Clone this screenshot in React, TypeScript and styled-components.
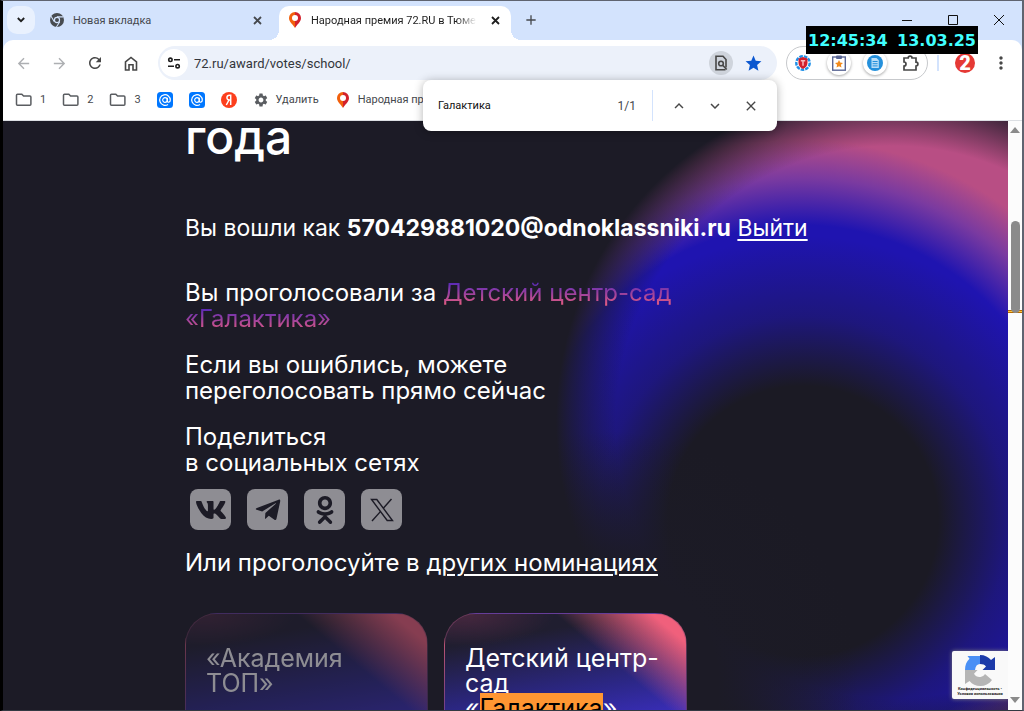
import React from "react";
import styled, { createGlobalStyle, css } from "styled-components";
import {
  MdArrowBack,
  MdArrowForward,
  MdRefresh,
  MdSettings,
  MdStar,
  MdMoreVert,
  MdClose,
  MdExpandLess,
  MdExpandMore,
  MdAdd,
} from "react-icons/md";
import { FaVk, FaTelegramPlane, FaOdnoklassniki } from "react-icons/fa";

const UI_FONT = `Roboto, "Open Sans", sans-serif`;
const PAGE_FONT = `Inter, "Open Sans", sans-serif`;
const NIGHT = "#1c1b26";

const GlobalStyle = createGlobalStyle`
  * { box-sizing: border-box; }
  body { margin: 0; background: #000; }
  button, input { font: inherit; color: inherit; border: 0; padding: 0; margin: 0; background: none; }
  button { cursor: pointer; }
`;

/* Browser window */

const Window = styled.div`
  height: 100vh;
  display: flex;
  flex-direction: column;
  border: 1px solid #5f6470;
  border-left: 3px solid #000;
  border-right-width: 2px;
  border-bottom-color: #333942;
  font-family: ${UI_FONT};
  font-size: 11px;
  color: #45484d;
  overflow: hidden;
`;

const Chrome = styled.header`
  position: relative;
  z-index: 2;
  flex: none;
  background: #d3e3fd;
`;

const TabStrip = styled.div`
  display: flex;
  align-items: flex-start;
  height: 39px;
  padding: 5px 0 0 4px;
`;

const TabSearch = styled.button`
  display: grid;
  place-items: center;
  width: 28px;
  height: 28px;
  border-radius: 10px;
  background: #e9f1fe;
  color: #1f1f1f;
`;

const Tab = styled.div<{ $active?: boolean }>`
  position: relative;
  display: flex;
  align-items: center;
  gap: ${(p) => (p.$active ? 8 : 9)}px;
  width: ${(p) => (p.$active ? 232 : 236)}px;
  height: ${(p) => (p.$active ? 34 : 28)}px;
  padding: ${(p) => (p.$active ? "0 9px 6px 8px" : "0 7px 0 15px")};
  margin-left: ${(p) => (p.$active ? 8 : 0)}px;
  border-radius: 10px 10px 0 0;
  ${(p) =>
    p.$active &&
    css`
      background: #fff;
      color: #1f1f1f;
      &::before,
      &::after {
        content: "";
        position: absolute;
        bottom: 0;
        width: 10px;
        height: 10px;
      }
      &::before {
        right: 100%;
        background: radial-gradient(circle at 0 0, transparent 10px, #fff 10px);
      }
      &::after {
        left: 100%;
        background: radial-gradient(circle at 100% 0, transparent 10px, #fff 10px);
      }
    `}
`;

const TabTitle = styled.span<{ $fade?: boolean }>`
  flex: 1;
  overflow: hidden;
  white-space: nowrap;
  ${(p) => p.$fade && css`mask-image: linear-gradient(90deg, #000 86%, transparent 98%);`}
`;

const TabClose = styled.button`
  display: grid;
  place-items: center;
  width: 14px;
  height: 14px;
`;

const NewTab = styled.button`
  display: grid;
  place-items: center;
  width: 28px;
  height: 28px;
  margin-left: 6px;
`;

const WindowButtons = styled.div`
  display: flex;
  margin-left: auto;
  color: #111;
`;

const WindowButton = styled.button`
  display: grid;
  place-items: center;
  width: 46px;
  height: 28px;
`;

const Toolbar = styled.div`
  display: flex;
  align-items: center;
  height: 46px;
  padding: 0 7px 0 6px;
  background: #fff;
  border-radius: 10px 10px 0 0;
`;

const NavButtons = styled.nav`
  display: flex;
  gap: 8px;
  margin-right: 13px;
`;

const IconButton = styled.button<{ $muted?: boolean }>`
  display: grid;
  place-items: center;
  width: 28px;
  height: 28px;
  border-radius: 50%;
  color: ${(p) => (p.$muted ? "#adafb2" : "#474747")};
`;

const AddressBar = styled.div`
  flex: 1;
  display: flex;
  align-items: center;
  gap: 6px;
  height: 34px;
  padding: 0 10px 0 2px;
  border-radius: 17px;
  background: #ecf1fa;
`;

const SiteInfo = styled(IconButton)`
  background: #fff;
  color: #1f1f1f;
`;

const AddressInput = styled.input`
  flex: 1;
  min-width: 0;
  height: 28px;
  font-size: 13px;
  color: #33363b;
  outline: none;
`;

const FindChip = styled.button`
  display: grid;
  place-items: center;
  width: 24px;
  height: 24px;
  border-radius: 50%;
  background: #cfd4dc;
  color: #474747;
`;

const StarButton = styled(IconButton)`
  color: #0b57d0;
`;

const Extensions = styled.div`
  display: flex;
  align-items: center;
  gap: 8px;
  height: 34px;
  padding: 0 2px;
  margin-left: 9px;
  border: 1px solid #c7c9cc;
  border-radius: 17px;
`;

const ExtensionButton = styled(IconButton)<{ $raised?: boolean }>`
  ${(p) => p.$raised && css`box-shadow: 0 1px 3px rgba(0, 0, 0, 0.35);`}
  width: ${(p) => (p.$raised ? 24 : 28)}px;
  height: ${(p) => (p.$raised ? 24 : 28)}px;
  margin: ${(p) => (p.$raised ? "0 2px" : "0")};
`;

const ToolbarDivider = styled.span`
  width: 2px;
  height: 16px;
  margin: 0 16px 0 9px;
  background: #d3e3fd;
`;

const Avatar = styled.button`
  display: grid;
  place-items: center;
  width: 20px;
  height: 20px;
  margin-right: 12px;
  border-radius: 50%;
  background: #e53935;
  color: #fff;
  font: 900 20px/20px Roboto, sans-serif;
`;

const Bookmarks = styled.nav`
  display: flex;
  align-items: center;
  gap: 16px;
  height: 35px;
  padding: 0 12px 7px;
  background: #fff;
  border-bottom: 1px solid #dcdfe3;
`;

const Bookmark = styled.a`
  display: flex;
  align-items: center;
  gap: 7px;
  color: inherit;
  text-decoration: none;
  white-space: nowrap;
`;

const FindBar = styled.form`
  position: absolute;
  top: 79px;
  right: 245px;
  display: flex;
  align-items: center;
  gap: 8px;
  width: 354px;
  height: 51px;
  padding: 0 12px 0 15px;
  border-radius: 8px;
  background: #fff;
  box-shadow: 0 1px 10px rgba(0, 0, 0, 0.3);
`;

const FindInput = styled.input`
  flex: 1;
  min-width: 0;
  height: 28px;
  color: #111;
  outline: none;
`;

const FindCount = styled.output`
  font-size: 12px;
`;

const FindDivider = styled.span`
  width: 1px;
  height: 31px;
  margin: 0 4px 0 8px;
  background: #d3e3fd;
`;

const Clock = styled.time`
  position: absolute;
  top: 25px;
  right: 44px;
  display: flex;
  justify-content: space-between;
  width: 172px;
  padding: 2px 2px 0;
  background: #000;
  color: #40ffff;
  font: bold 16px/26px "DejaVu Sans", sans-serif;
`;

/* Page */

const Body = styled.div`
  flex: 1;
  min-height: 0;
  display: flex;
`;

const Page = styled.main`
  position: relative;
  flex: 1;
  min-width: 0;
  overflow: hidden;
  padding-left: 182px;
  color: #fff;
  font: 400 24px/26px ${PAGE_FONT};
  background:
    radial-gradient(circle at right 400px top 560px, ${NIGHT} 110px, transparent 250px),
    radial-gradient(circle at right 116px top 301px, transparent 276px, #1c1b2680 306px, ${NIGHT} 336px),
    radial-gradient(circle at right 205px top 400px, #1b1a24 135px, #1d1863aa 205px, transparent 285px),
    radial-gradient(circle at right 208px top 369px, #1f14b0 265px, #7a3aa0 312px, #b84e84 350px);
`;

const Title = styled.h1`
  margin: 0 0 62px;
  font-size: 48px;
  font-weight: 500;
  line-height: 32px;
`;

const Signed = styled.p`
  margin: 0 0 39px;
  font-size: 23px;
  white-space: nowrap;
`;

const Text = styled.p`
  margin: 0 0 20px;
`;

const ShareText = styled(Text)`
  margin-bottom: 13px;
`;

const PageLink = styled.a`
  color: inherit;
  text-decoration: underline;
  text-decoration-thickness: 2px;
  text-underline-offset: 3px;
`;

const Nominee = styled.span`
  color: transparent;
  background: linear-gradient(#3b1fc4, #f0607c);
  background-clip: text;
  box-decoration-break: clone;
  -webkit-box-decoration-break: clone;
`;

const Share = styled.div`
  display: flex;
  gap: 16px;
  margin: 0 0 20px 5px;
`;

const ShareButton = styled.a`
  display: grid;
  place-items: center;
  width: 41px;
  height: 41px;
  border-radius: 8px;
  background: #8e8d93;
  color: ${NIGHT};
`;

const Cards = styled.div`
  display: flex;
  gap: 16px;
  margin-top: 37px;
`;

const Card = styled.article<{ $dimmed?: boolean }>`
  width: 243px;
  height: 240px;
  padding: 32px 20px 0;
  border: 1px solid #8a4a7088;
  border-radius: 32px;
  font-size: 25px;
  line-height: 25px;
  opacity: ${(p) => (p.$dimmed ? 0.5 : 1)};
  background:
    linear-gradient(220deg, #f0607c 22px, transparent 84px),
    radial-gradient(ellipse 90px 32px at 8% 0, #6a304c88, transparent),
    linear-gradient(170deg, #201e30 12%, #2c2788 36%, #3d2fc8 54%);
`;

const CardTitle = styled.h2`
  margin: 0;
  font: inherit;
  white-space: nowrap;
`;

const Found = styled.mark`
  background: #ff9632;
  color: #000;
`;

const Captcha = styled.aside`
  position: absolute;
  right: 0;
  bottom: 11px;
  display: flex;
  flex-direction: column;
  align-items: center;
  width: 56px;
  height: 48px;
  padding-top: 4px;
  border-radius: 2px 0 0 2px;
  background: #f9f9f9;
  box-shadow: 0 0 4px #808080;
  color: #222;
  font: bold 4px/5px Roboto, sans-serif;
  text-align: center;
`;

const ScrollTrack = styled.div`
  display: flex;
  flex-direction: column;
  align-items: center;
  width: 14px;
  padding: 6px 0 7px;
  background: #fcfcfc;
  color: #8b8b8b;
`;

const ScrollThumb = styled.div`
  position: relative;
  width: 9px;
  height: 92px;
  margin-top: 88px;
  border-radius: 5px;
  background: #8b8b8b;
`;

const FindMark = styled.span`
  width: 14px;
  height: 3px;
  margin: -3px 0 auto;
  background: #ffc83d;
  border: solid #b86a00;
  border-width: 1px 0;
`;

/* Icons */

const CloseIcon = () => (
  <svg width="9" height="9" viewBox="0 0 9 9" stroke="currentColor" strokeWidth="1.8">
    <path d="M1 1l7 7M8 1L1 8" />
  </svg>
);

const ChromeIcon = () => (
  <svg width="14" height="14" viewBox="0 0 24 24" fill="none">
    <circle cx="12" cy="12" r="12" fill="#474b50" />
    <circle cx="12" cy="12" r="5.4" fill="#d3e3fd" />
    <circle cx="12" cy="12" r="3.4" fill="#474b50" />
    <path d="M12 6.6h11M7.4 15L1.8 5.6M16.7 15L11 24" stroke="#d3e3fd" strokeWidth="1.8" />
  </svg>
);

const PinIcon = () => (
  <svg width="16" height="16" viewBox="0 0 16 16">
    <path d="M8 0a6 6 0 0 0-6 6c0 4 4 6.500 6 10z" fill="#f2600c" />
    <path d="M8 0a6 6 0 0 1 6 6c0 4-4 6.500-6 10z" fill="#d3202b" />
    <circle cx="8" cy="6" r="3" fill="#fff" />
  </svg>
);

const HomeIcon = () => (
  <svg width="14" height="15" viewBox="0 0 14 15" fill="none" stroke="currentColor" strokeWidth="1.6">
    <path d="M1.500 5.800L7 1.400l5.500 4.400v8.200H9V8.800H5V14H1.500z" />
  </svg>
);

const TuneIcon = () => (
  <svg width="14" height="12" viewBox="0 0 14 12" fill="none" stroke="currentColor" strokeWidth="1.6">
    <circle cx="3.400" cy="2.800" r="1.700" />
    <path d="M7 2.800h6M1 9.200h6" />
    <circle cx="10.600" cy="9.200" r="1.700" />
  </svg>
);

const FindInPageIcon = () => (
  <svg width="14" height="16" viewBox="0 0 14 16" fill="none" stroke="currentColor" strokeWidth="1.6">
    <path d="M12 12.500V4.500L9 1.200H2v13.600h9.500" />
    <circle cx="7" cy="8.500" r="2.300" />
    <path d="M8.700 10.200l4 4.300" />
  </svg>
);

const FolderIcon = () => (
  <svg width="18" height="14" viewBox="0 0 18 14" fill="none" stroke="#5a5d61" strokeWidth="1.5">
    <path d="M1.500 2.200c0-.7.300-1 1-1h4.300l1.800 1.900h6.300c.7 0 1 .3 1 1v7.100c0 .7-.3 1-1 1H2.500c-.7 0-1-.3-1-1z" />
  </svg>
);

const MailIcon = () => (
  <svg width="16" height="16" viewBox="0 0 16 16" fill="none">
    <rect width="16" height="16" rx="3.5" fill="#07f" />
    <circle cx="8" cy="8" r="2.300" stroke="#fff" strokeWidth="1.2" />
    <path d="M10.300 5.800v3c0 2.200 3 1.800 3-.8A5.300 5.300 0 1 0 11 12.400" stroke="#fff" strokeWidth="1.2" />
  </svg>
);

const YandexIcon = () => (
  <svg width="16" height="16" viewBox="0 0 16 16" fill="none">
    <circle cx="8" cy="8" r="8" fill="#fc3f1d" />
    <path d="M9.700 13V3.200H8.400C5.200 3.200 5.100 8 8.300 8h1.400M8 8l-2.700 5" stroke="#fff" strokeWidth="1.5" />
  </svg>
);

const ShieldIcon = () => (
  <svg width="16" height="16" viewBox="0 0 16 16" fill="none">
    <circle cx="8" cy="8" r="6.700" stroke="#1e90e8" strokeWidth="2.4" strokeDasharray="3.6 1" />
    <path d="M3.500 3.500L8 2l4.500 1.500V8c0 3-2.200 5-4.500 6-2.300-1-4.500-3-4.500-6z" fill="#d21f2d" />
    <path d="M5.800 5.800h4.400M8 5.800v5" stroke="#f6b7bb" strokeWidth="1.5" />
  </svg>
);

const ClipboardIcon = () => (
  <svg width="16" height="16" viewBox="0 0 16 16" fill="none">
    <rect x="1.700" y="2" width="12.600" height="13.200" fill="#fff" stroke="#5a6694" strokeWidth="1.4" />
    <rect x="5" y=".5" width="6" height="3.500" rx="1" fill="#5a6694" />
    <path d="M8 5l1.200 2.600 2.800.3-2.100 1.900.6 2.800L8 11.200l-2.500 1.400.6-2.800L4 7.900l2.800-.3z" fill="#f28a1c" />
  </svg>
);

const DocumentIcon = () => (
  <svg width="16" height="16" viewBox="0 0 16 16" fill="none">
    <circle cx="8" cy="8" r="8" fill="#2490dc" />
    <path d="M4.500 3h5l2.300 2.300V13H4.500z" fill="#b9ddf7" />
    <path d="M5.600 6.500h5M5.600 8.700h5M5.600 10.900h5" stroke="#2490dc" />
  </svg>
);

const PuzzleIcon = () => (
  <svg width="18" height="18" viewBox="0 0 18 18" fill="none" stroke="currentColor" strokeWidth="1.7">
    <path d="M2 4h4.200a1.900 1.900 0 0 1 3.800 0h4v4.200a1.900 1.900 0 0 1 0 3.800v4H2v-4a2 2 0 0 0 0-4z" />
  </svg>
);

const XLogo = () => (
  <svg width="24" height="24" viewBox="0 0 24 24" fill="none" stroke="currentColor" strokeWidth="1.4">
    <path d="M1.500 1.500h5.300L22.500 22.500h-5.300z" />
    <path d="M21.500 1l-8.200 9.300M10.600 13.400L2 23" />
  </svg>
);

const RecaptchaIcon = () => (
  <svg width="30" height="31" viewBox="0 0 30 31">
    <path d="M15 0v9c-3 0-4.500 2-5 6H0C0 10 1.500 6.500 4.500 3.800L2.500 1H15z" fill="#4a90f5" />
    <path d="M15 0c4.800 0 8.500 2 11 5l4-3v13H17.500l3.500-3.500C19.500 9.700 18 9 15 9z" fill="#1c3aa9" />
    <path d="M0 15h12.500L9 18.800c1.500 2.500 4 3.700 6.500 3.200 2-.4 3.300-1.300 4.500-3l7 6c-3 4-7 6-11.500 6-4.700 0-8.200-1.800-11-5L0 29z" fill="#b5b5b5" />
  </svg>
);

const ArrowIcon = ({ down }: { down?: boolean }) => (
  <svg width="10" height="6" viewBox="0 0 10 6" fill="currentColor">
    <path d={down ? "M0 0h10L5 6z" : "M0 6h10L5 0z"} />
  </svg>
);

export default function App() {
  return (
    <Window>
      <GlobalStyle />
      <Chrome>
        <TabStrip>
          <TabSearch aria-label="Поиск вкладок">
            <svg width="8" height="6" viewBox="0 0 8 6" fill="none" stroke="currentColor" strokeWidth="1.8">
              <path d="M.8 1L4 4.200 7.200 1" />
            </svg>
          </TabSearch>
          <Tab>
            <ChromeIcon />
            <TabTitle>Новая вкладка</TabTitle>
            <TabClose aria-label="Закрыть вкладку"><CloseIcon /></TabClose>
          </Tab>
          <Tab $active>
            <PinIcon />
            <TabTitle $fade>Народная премия 72.RU в Тюмени</TabTitle>
            <TabClose aria-label="Закрыть вкладку"><CloseIcon /></TabClose>
          </Tab>
          <NewTab aria-label="Новая вкладка"><MdAdd size={16} /></NewTab>
          <WindowButtons>
            <WindowButton aria-label="Свернуть">
              <svg width="10" height="10" viewBox="0 0 10 10" stroke="currentColor"><path d="M0 5.500h10" /></svg>
            </WindowButton>
            <WindowButton aria-label="Развернуть">
              <svg width="10" height="10" viewBox="0 0 10 10" fill="none" stroke="currentColor"><path d="M.5.500h9v9h-9z" /></svg>
            </WindowButton>
            <WindowButton aria-label="Закрыть">
              <svg width="10" height="10" viewBox="0 0 10 10" stroke="currentColor"><path d="M0 0l10 10M10 0L0 10" /></svg>
            </WindowButton>
          </WindowButtons>
        </TabStrip>

        <Toolbar>
          <NavButtons aria-label="Навигация">
            <IconButton $muted aria-label="Назад"><MdArrowBack size={17} /></IconButton>
            <IconButton $muted aria-label="Вперёд"><MdArrowForward size={17} /></IconButton>
            <IconButton aria-label="Обновить"><MdRefresh size={18} /></IconButton>
            <IconButton aria-label="Главная"><HomeIcon /></IconButton>
          </NavButtons>
          <AddressBar>
            <SiteInfo aria-label="Сведения о сайте"><TuneIcon /></SiteInfo>
            <AddressInput aria-label="Адресная строка" defaultValue="72.ru/award/votes/school/" />
            <FindChip aria-label="Найти на странице"><FindInPageIcon /></FindChip>
            <StarButton aria-label="Изменить закладку"><MdStar size={19} /></StarButton>
          </AddressBar>
          <Extensions>
            <ExtensionButton aria-label="Защита"><ShieldIcon /></ExtensionButton>
            <ExtensionButton $raised aria-label="Избранное"><ClipboardIcon /></ExtensionButton>
            <ExtensionButton $raised aria-label="Документы"><DocumentIcon /></ExtensionButton>
            <ExtensionButton aria-label="Расширения"><PuzzleIcon /></ExtensionButton>
          </Extensions>
          <ToolbarDivider />
          <Avatar aria-label="Профиль">2</Avatar>
          <IconButton aria-label="Меню"><MdMoreVert size={20} /></IconButton>
        </Toolbar>

        <Bookmarks aria-label="Закладки">
          <Bookmark href="#"><FolderIcon />1</Bookmark>
          <Bookmark href="#"><FolderIcon />2</Bookmark>
          <Bookmark href="#"><FolderIcon />3</Bookmark>
          <Bookmark href="#" aria-label="Почта"><MailIcon /></Bookmark>
          <Bookmark href="#" aria-label="Почта"><MailIcon /></Bookmark>
          <Bookmark href="#" aria-label="Яндекс"><YandexIcon /></Bookmark>
          <Bookmark href="#"><MdSettings size={16} color="#5a5d61" />Удалить</Bookmark>
          <Bookmark href="#"><PinIcon />Народная пр</Bookmark>
        </Bookmarks>

        <FindBar onSubmit={(e) => e.preventDefault()}>
          <FindInput aria-label="Найти на странице" defaultValue="Галактика" />
          <FindCount>1/1</FindCount>
          <FindDivider />
          <IconButton type="button" aria-label="Предыдущее"><MdExpandLess size={18} /></IconButton>
          <IconButton type="button" aria-label="Следующее"><MdExpandMore size={18} /></IconButton>
          <IconButton type="button" aria-label="Закрыть поиск"><MdClose size={16} /></IconButton>
        </FindBar>
        <Clock><span>12:45:34</span><span>13.03.25</span></Clock>
      </Chrome>

      <Body>
        <Page>
          <Title>года</Title>
          <Signed>
            Вы вошли как <strong>570429881020@odnoklassniki.ru</strong> <PageLink href="#">Выйти</PageLink>
          </Signed>
          <Text>
            Вы проголосовали за <Nominee>Детский центр-сад<br />«Галактика»</Nominee>
          </Text>
          <Text>
            Если вы ошиблись, можете<br />переголосовать прямо сейчас
          </Text>
          <ShareText>
            Поделиться<br />в социальных сетях
          </ShareText>
          <Share>
            <ShareButton href="#" aria-label="ВКонтакте"><FaVk size={32} /></ShareButton>
            <ShareButton href="#" aria-label="Telegram"><FaTelegramPlane size={28} /></ShareButton>
            <ShareButton href="#" aria-label="Одноклассники"><FaOdnoklassniki size={28} /></ShareButton>
            <ShareButton href="#" aria-label="X"><XLogo /></ShareButton>
          </Share>
          <Text>
            Или проголосуйте в <PageLink href="#">других номинациях</PageLink>
          </Text>
          <Cards>
            <Card $dimmed>
              <CardTitle>«Академия<br />ТОП»</CardTitle>
            </Card>
            <Card>
              <CardTitle>Детский центр-<br />сад<br />«<Found>Галактика</Found>»</CardTitle>
            </Card>
          </Cards>
          <Captcha>
            <RecaptchaIcon />
            <span>Конфиденциальность •<br />Условия использования</span>
          </Captcha>
        </Page>
        <ScrollTrack>
          <ArrowIcon />
          <ScrollThumb />
          <FindMark />
          <ArrowIcon down />
        </ScrollTrack>
      </Body>
    </Window>
  );
}
